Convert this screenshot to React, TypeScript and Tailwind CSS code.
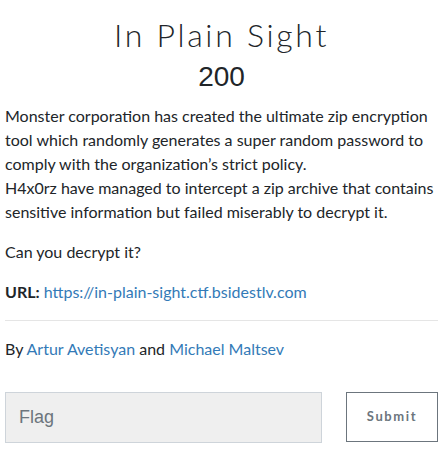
import React from "react";

export default function App() {
  return (
    <div className="w-[441px] h-[460px] bg-white pl-[5px] pr-[3px] text-[#212529]" style={{ fontFamily: "Lato, sans-serif" }}>
      <div className="pt-[13px] text-center">
        <h1 className="text-[32px] leading-[44px] font-light tracking-[2.7px] text-[#212529]" style={{ fontFamily: "Lato, sans-serif" }}>
          In Plain Sight
        </h1>
        <div className="text-[28px] leading-[36px] mt-[2px]" style={{ fontFamily: "'Liberation Sans', Arial, sans-serif" }}>
          200
        </div>
      </div>
      <div className="mt-[9px] text-[16px] leading-6">
        <p className="mb-4">
          Monster corporation has created the ultimate zip encryption tool which randomly generates a super random password to comply with the organization’s strict policy.
          <br />
          H4x0rz have managed to intercept a zip archive that contains sensitive information but failed miserably to decrypt it.
        </p>
        <p className="mb-4">Can you decrypt it?</p>
        <p className="mb-4">
          <strong className="font-bold">URL:</strong>{" "}
          <a className="text-[#337ab7]" href="#">https://in-plain-sight.ctf.bsidestlv.com</a>
        </p>
        <hr className="border-0 border-t border-[#e5e5e5] mt-4 mb-4" />
        <p>
          By <a className="text-[#337ab7]" href="#">Artur Avetisyan</a> and{" "}
          <a className="text-[#337ab7]" href="#">Michael Maltsev</a>
        </p>
      </div>
      <div className="mt-[31px] flex items-start justify-between">
        <input
          className="w-[317px] h-[51px] bg-[#efefef] border border-[#ced4da] px-[13px] text-[18px] text-[#495057] placeholder:text-[#6c757d] outline-none"
          style={{ fontFamily: "'Liberation Sans', Arial, sans-serif" }}
          placeholder="Flag"
        />
        <button className="w-[92px] h-[50px] border border-[#6c757d] bg-white text-[13px] font-bold tracking-[1.6px] text-[#6c757d]" style={{ fontFamily: "Lato, sans-serif" }}>
          Submit
        </button>
      </div>
    </div>
  );
}
